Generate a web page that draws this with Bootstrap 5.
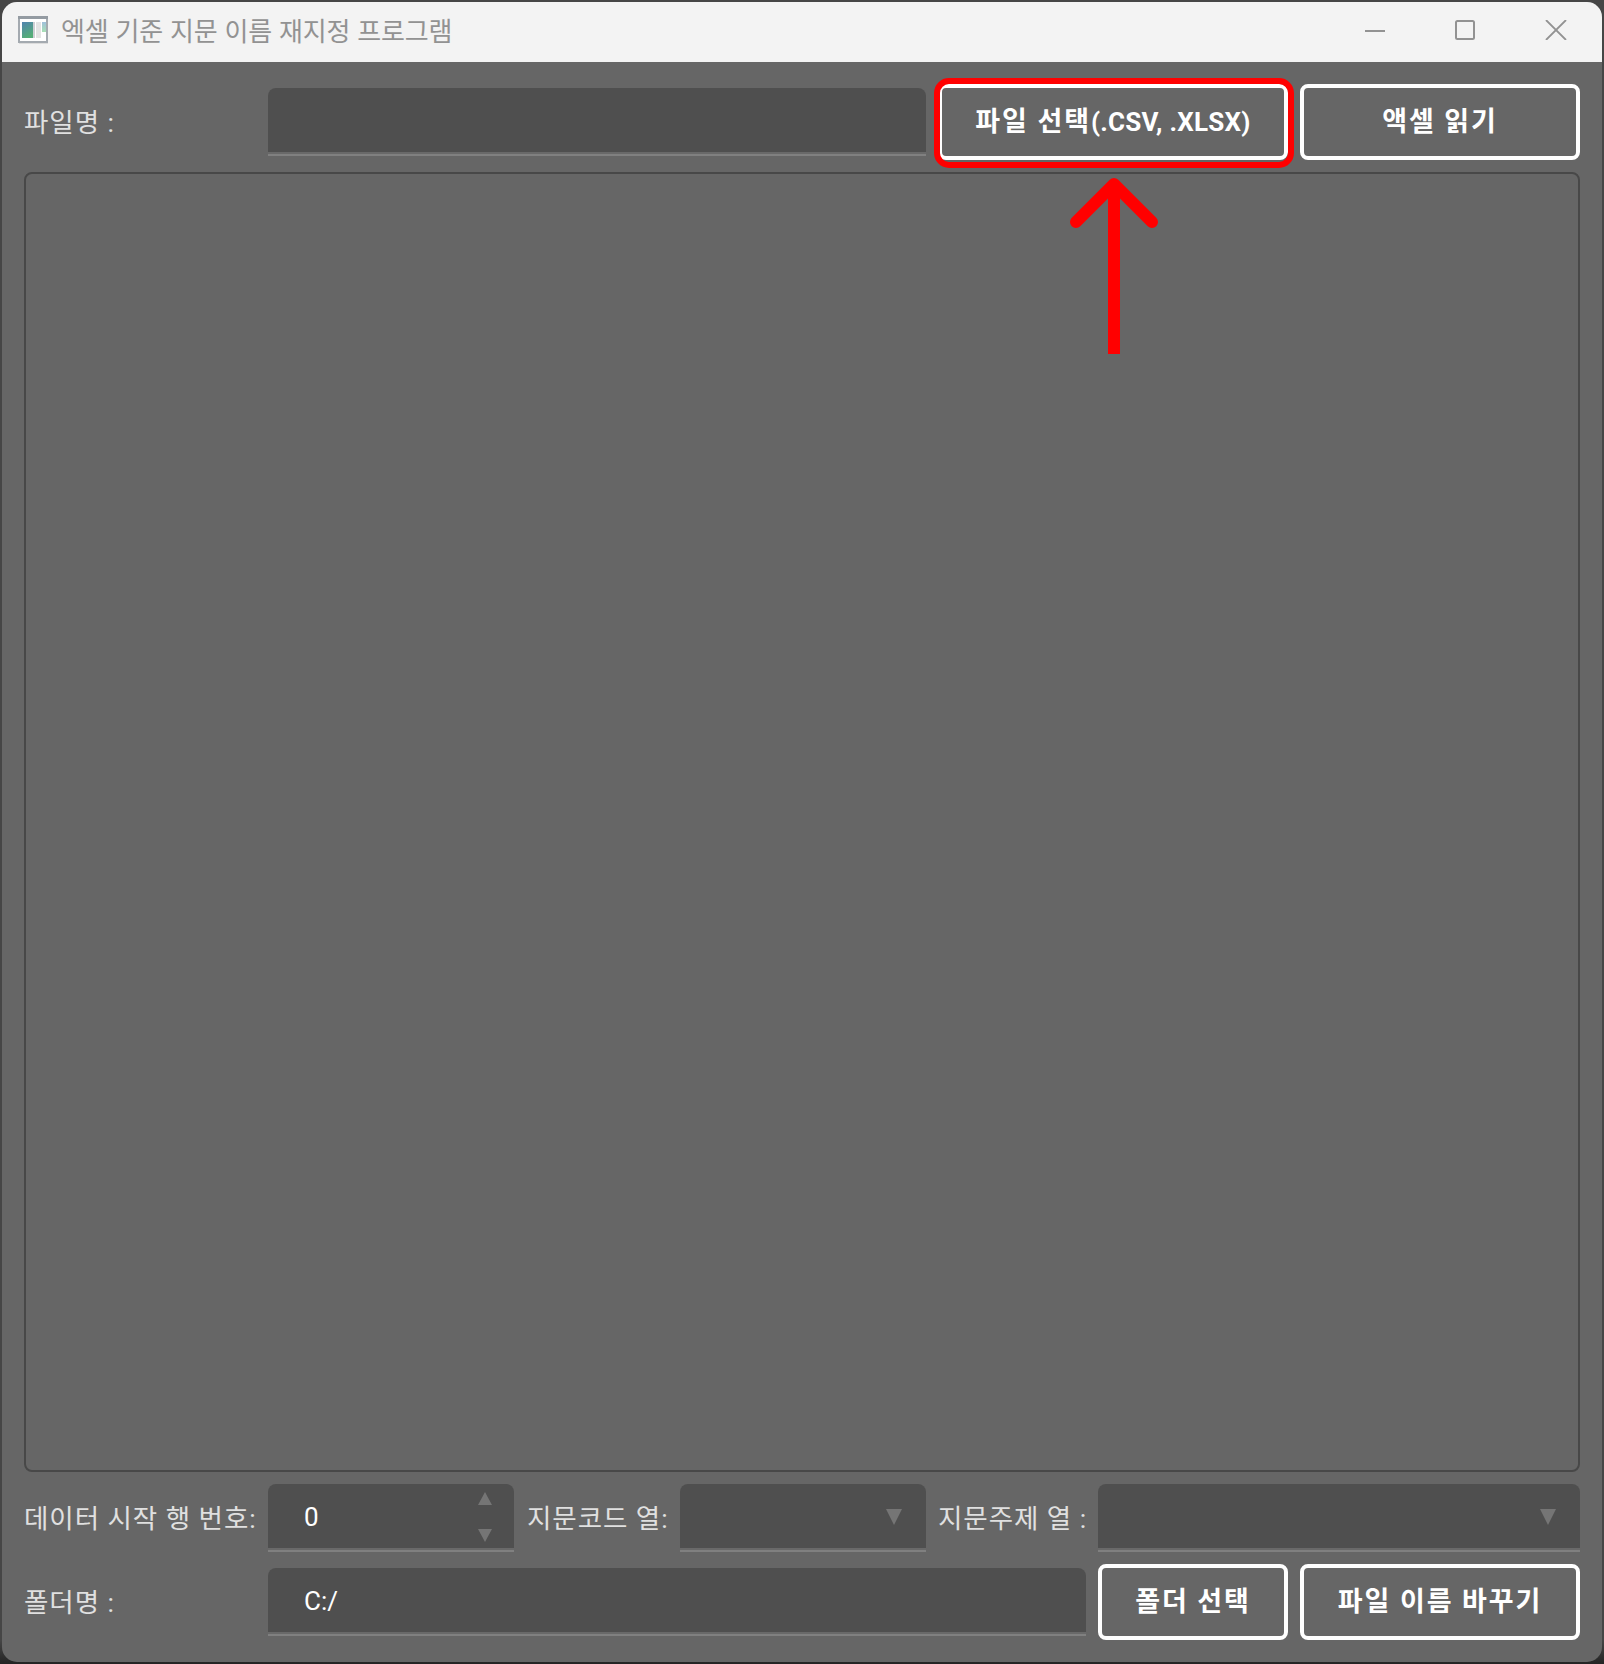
<!DOCTYPE html>
<html lang="ko">
<head>
<meta charset="utf-8">
<title>엑셀 기준 지문 이름 재지정 프로그램</title>
<link rel="stylesheet" href="https://cdn.jsdelivr.net/npm/bootstrap@5.3.0/dist/css/bootstrap.min.css">
<style>
  html, body { height: 1664px; overflow: hidden; }
  body { background: linear-gradient(#464646 0, #464646 1640px, #242424 1664px); padding: 2px; font-family: Roboto, "Noto Sans CJK KR", sans-serif; font-size: 26px; line-height: 1; }
  .app-window { width: 1600px; height: 1660px; background: #666; border-radius: 15px; overflow: hidden; position: relative; }
  .title-strip { height: 60px; background: #f3f3f3; color: #929292; padding: 0 35px 0 16px; font-family: "Noto Sans CJK KR", sans-serif; font-size: 26px; letter-spacing: -.2px; }
  .title-icon { margin-top: -4px; }
  .title-text { margin-left: 12px; margin-top: -5px; }
  .win-controls { gap: 70px; margin-top: -4px; }
  .work-area { height: 1600px; padding: 22px; }
  .field-label { color: #e0e0e0; font-size: 26.5px; letter-spacing: .95px; white-space: nowrap; flex: none; padding-top: 2px; }
  .w-first { width: 244px; }
  .w-code { width: 166px; padding-left: 13px; }
  .w-topic { width: 172px; padding-left: 12px; }
  .form-row { height: 76px; gap: 12px; }
  .fill-box { height: 68px; background: #4f4f4f; border: 0; border-bottom: 2px solid #808080; box-shadow: inset 0 -2px #696969; border-radius: 8px 8px 0 0; color: #fff; padding: 0 0 0 36px; font-size: 26px; min-width: 0; }
  .btn-line { height: 76px; border: 4px solid #fff; border-radius: 8px; color: #fff; font-weight: 700; font-size: 27px; line-height: 1; letter-spacing: 1.9px; padding: 1px 0 0; flex: none; white-space: nowrap; }
  .latin { letter-spacing: .25px; font-size: 26px; }
  .table-pane { height: 1300px; border: 2px solid #484848; border-radius: 8px; margin: 12px 0; }
  .w-246 { width: 246px; flex: none; }
  .w-280 { width: 280px; }
  .w-190 { width: 190px; }
  .w-350 { width: 350px; }
  .spin-arrows { height: 50px; margin-right: 22px; }
  .arrow-tri { display: block; fill: #757575; }
  .folder-row { margin-top: 12px; }
  .callout { position: absolute; left: 932px; top: 76px; width: 360px; height: 278px; overflow: visible; }
</style>
<script src="https://cdn.jsdelivr.net/npm/bootstrap@5.3.0/dist/js/bootstrap.bundle.min.js"></script>
</head>
<body>
<div class="app-window">
  <header class="title-strip d-flex align-items-center">
    <svg class="title-icon" width="31" height="28" viewBox="0 0 31 28">
      <defs><linearGradient id="scene" x1="0" y1="0" x2=".4" y2="1"><stop offset="0" stop-color="#5284b0"/><stop offset="1" stop-color="#55ad78"/></linearGradient>
      <linearGradient id="leaf" x1="0" y1="0" x2="0" y2="1"><stop offset="0" stop-color="#a0c0dc"/><stop offset="1" stop-color="#a8e0b4"/></linearGradient></defs>
      <rect x="1" y="26" width="29" height="2" fill="#dcdcdc"/>
      <rect x="1" y="1" width="28" height="25" fill="#fff" stroke="#a4aab0" stroke-width="2"/>
      <rect x="0" y="0" width="30" height="3" fill="#949ba2"/>
      <rect x="4" y="6" width="11" height="16" fill="url(#scene)"/>
      <rect x="15" y="6" width="2" height="16" fill="#cfd0d4"/>
      <rect x="18" y="6" width="5" height="16" fill="#e4e4e4"/>
      <rect x="24" y="6" width="4" height="10" fill="url(#leaf)"/>
    </svg>
    <span class="title-text">엑셀 기준 지문 이름 재지정 프로그램</span>
    <div class="win-controls d-flex ms-auto align-items-center" aria-hidden="true">
      <svg width="20" height="20" viewBox="0 0 20 20"><path d="M0 11H20" stroke="#929292" stroke-width="2"/></svg>
      <svg width="20" height="20" viewBox="0 0 20 20"><rect x="1" y="1" width="18" height="18" rx="1.5" fill="none" stroke="#929292" stroke-width="2"/></svg>
      <svg width="22" height="20" viewBox="0 0 22 20"><path d="M1 0L21 20M21 0L1 20" stroke="#929292" stroke-width="1.8"/></svg>
    </div>
  </header>

  <main class="work-area">
    <div class="form-row d-flex align-items-center">
      <div class="d-flex align-items-center flex-grow-1">
        <label class="field-label w-first" for="fileName">파일명 :</label>
        <input id="fileName" class="fill-box flex-grow-1" type="text">
      </div>
      <button class="btn btn-line w-350" type="button">파일 선택<span class="latin">(.CSV, .XLSX)</span></button>
      <button class="btn btn-line w-280" type="button">액셀 읽기</button>
    </div>

    <div class="table-pane"></div>

    <div class="d-flex align-items-center">
      <span class="field-label w-first">데이터 시작 행 번호:</span>
      <div class="fill-box w-246 d-flex align-items-center justify-content-between">
        <span>0</span>
        <span class="spin-arrows d-flex flex-column justify-content-between">
          <svg class="arrow-tri" width="14" height="13" viewBox="0 0 14 13"><path d="M7 0L14 13H0Z"/></svg>
          <svg class="arrow-tri" width="14" height="13" viewBox="0 0 14 13"><path d="M0 0H14L7 13Z"/></svg>
        </span>
      </div>
      <span class="field-label w-code">지문코드 열:</span>
      <div class="fill-box w-246 d-flex align-items-center justify-content-end">
        <svg class="arrow-tri me-4" width="16" height="16" viewBox="0 0 16 16"><path d="M0 0H16L8 16Z"/></svg>
      </div>
      <span class="field-label w-topic">지문주제 열 :</span>
      <div class="fill-box flex-grow-1 d-flex align-items-center justify-content-end">
        <svg class="arrow-tri me-4" width="16" height="16" viewBox="0 0 16 16"><path d="M0 0H16L8 16Z"/></svg>
      </div>
    </div>

    <div class="form-row folder-row d-flex align-items-center">
      <div class="d-flex align-items-center flex-grow-1">
        <label class="field-label w-first" for="folderName">폴더명 :</label>
        <input id="folderName" class="fill-box flex-grow-1" type="text" value="C:/">
      </div>
      <button class="btn btn-line w-190" type="button">폴더 선택</button>
      <button class="btn btn-line w-280" type="button">파일 이름 바꾸기</button>
    </div>
  </main>

  <svg class="callout" viewBox="0 0 360 278" fill="none" stroke="#f00" aria-hidden="true">
    <rect x="3" y="3" width="354" height="84" rx="12" stroke-width="6"/>
    <path d="M142 144L180 106L218 144" stroke-width="12" stroke-linecap="round" stroke-linejoin="round"/>
    <path d="M180 108V276" stroke-width="12"/>
  </svg>
</div>
</body>
</html>
